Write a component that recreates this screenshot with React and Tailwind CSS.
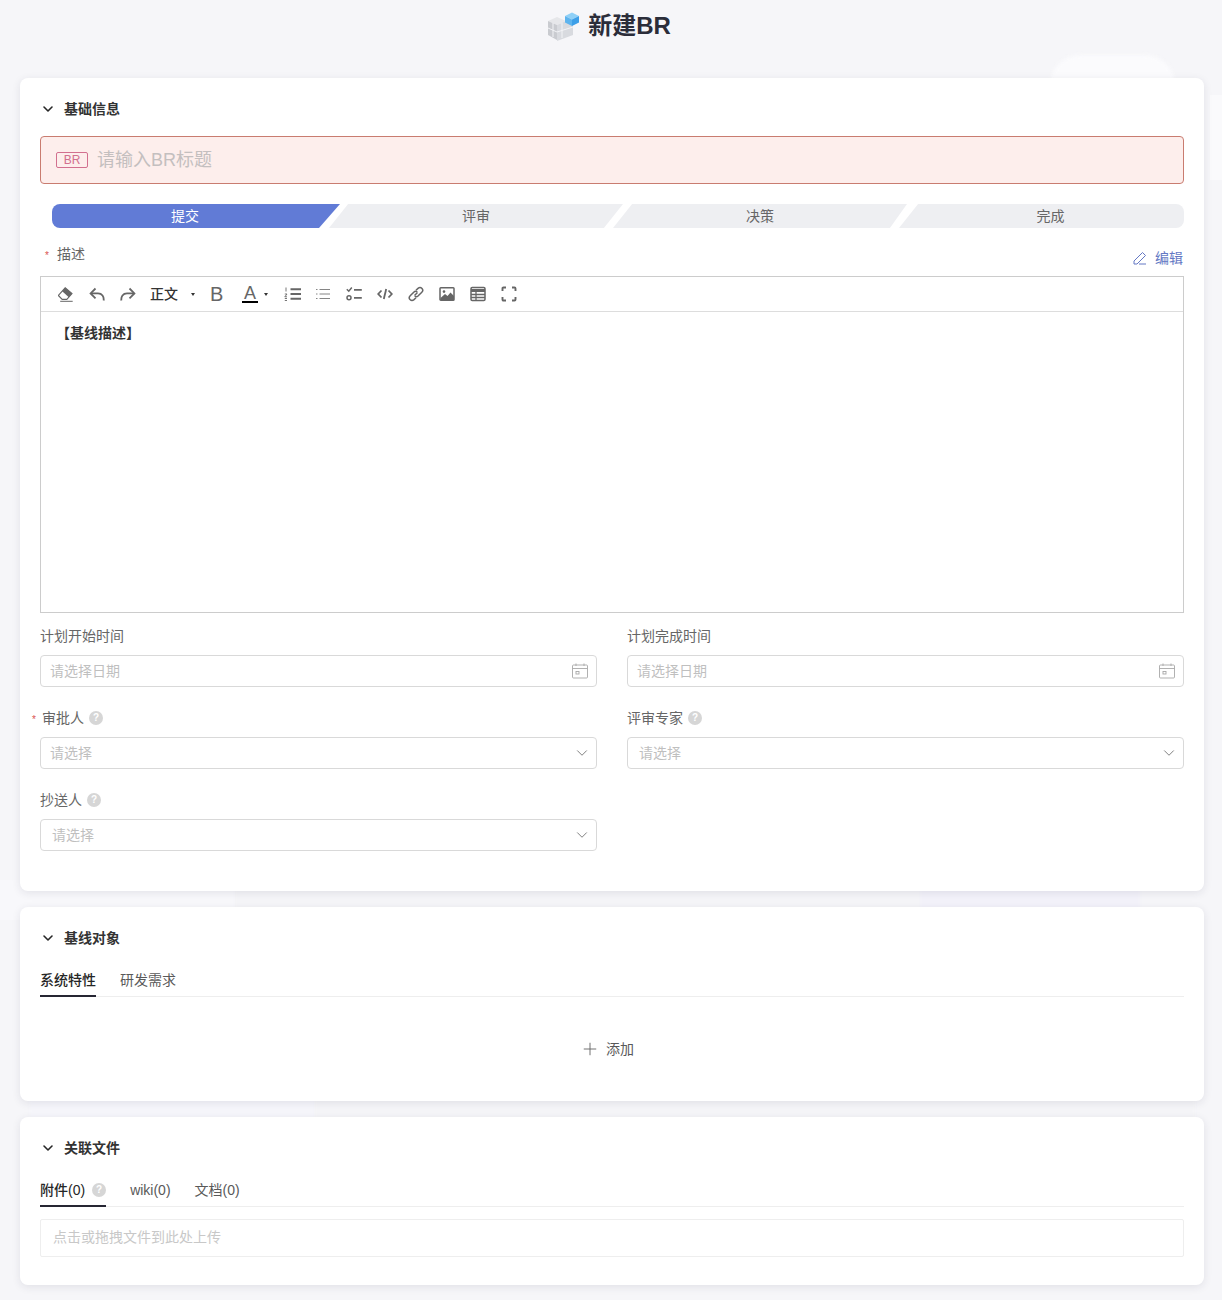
import React from "react";
import { ChevronDown, Plus } from "lucide-react";

// 도구모음 아이콘
const Ico = ({ children, w = 16, h = 16 }) => (
    <svg width={w} height={h} viewBox="0 0 16 16" fill="none" stroke="#666" strokeWidth="1.8">
        {children}
    </svg>
);

const toolIcons = [
    <Ico><path d="M0.4 9.5 L7.2 1.8 L14 7.5 L8.8 13.4 L4.2 13.4 Z" fill="#fff" strokeWidth="1.1" /><path d="M4.2 5.2 L7.2 1.8 L14 7.5 L10.8 11.2 Z" fill="#666" stroke="none" /><path d="M2.2 15.3 H14.7" strokeWidth="1" /></Ico>,
    <Ico><path d="M6.5 2.5 L1.6 7.4 L6.5 12.3" /><path d="M2 7.4 H9 C13 7.4 15.2 10.5 14.6 14.5" /></Ico>,
    <Ico><path d="M9.5 2.5 L14.4 7.4 L9.5 12.3" /><path d="M14 7.4 H7 C3 7.4 0.8 10.5 1.4 14.5" /></Ico>,
];

const listIcons = [
    <Ico w={18}><path d="M6.5 3.2 H17 M6.5 8 H17 M6.5 12.8 H17" strokeWidth="1.9" /><path d="M2 1.5 V5.5 M0.8 8 H3 L0.8 10.8 H3 M0.8 12.5 H3 M0.8 14.5 H3" strokeWidth="0.9" /></Ico>,
    <Ico><path d="M4.5 3.5 H15 M4.5 8 H15 M4.5 12.5 H15" strokeWidth="0.8" /><path d="M1 3.5 H2.5 M1 8 H2.5 M1 12.5 H2.5" strokeWidth="0.8" /></Ico>,
    <Ico><path d="M0.8 3.2 L2.8 5.2 L5.8 1.6" strokeWidth="1.5" /><path d="M8 3.8 H15.8 M8 11.8 H15.8" /><circle cx="3" cy="11.8" r="2" strokeWidth="1.5" /></Ico>,
    <Ico><path d="M4.5 4.5 L1.2 8 L4.5 11.5 M11.5 4.5 L14.8 8 L11.5 11.5" /><path d="M9.2 3 L6.8 13" /></Ico>,
    <Ico><path d="M6.5 9.5 L9.5 6.5" strokeWidth="1.5" /><path d="M8 4.2 L10 2.4 C11.3 1.3 13 1.5 14 2.5 C15 3.6 14.9 5.2 13.8 6.3 L10 10 C8.9 11 7.5 10.8 6.8 10" strokeWidth="1.5" /><path d="M8 11.8 L6 13.6 C4.7 14.7 3 14.5 2 13.5 C1 12.4 1.1 10.8 2.2 9.7 L6 6 C7 5 8.5 5.2 9.2 6" strokeWidth="1.5" /></Ico>,
    <Ico><rect x="1" y="1.8" width="14" height="12.4" rx="0.8" strokeWidth="1.5" /><circle cx="5" cy="5.6" r="1.3" fill="#666" stroke="none" /><path d="M1.5 12 L6 8 L8.5 10 L11.5 6.5 L15 10 V14 H1.5 Z" fill="#666" stroke="none" /></Ico>,
    <Ico><rect x="1" y="1.5" width="14" height="13" rx="1.2" strokeWidth="1.5" /><path d="M1 4.5 H15" strokeWidth="3" /><path d="M1 8.5 H15 M1 11.5 H15 M6 5.5 V14.5" strokeWidth="1.3" /></Ico>,
    <Ico><path d="M1.5 5 V2.5 Q1.5 1.5 2.5 1.5 H5 M11 1.5 H13.5 Q14.5 1.5 14.5 2.5 V5 M14.5 11 V13.5 Q14.5 14.5 13.5 14.5 H11 M5 14.5 H2.5 Q1.5 14.5 1.5 13.5 V11" strokeWidth="1.9" /></Ico>,
];

const Caret = () => <span className="w-0 h-0 border-x-[2px] border-x-transparent border-t-[3px] border-t-[#333]" />;

const Help = ({ className = "" }) => (
    <span className={`w-[14px] h-[14px] rounded-full bg-[#d6d6d6] text-white text-[10px] leading-[14px] font-bold text-center ${className}`}>?</span>
);

const Star = ({ className = "" }) => <span className={`text-[#d9534f] text-[10px] leading-none ${className}`}>*</span>;

const Heading = ({ title }) => (
    <div className="flex items-center h-[22px]">
        <ChevronDown size={16} strokeWidth={2.4} className="text-[#262626]" />
        <span className="ml-[8px] text-sm font-semibold text-[#333]">{title}</span>
    </div>
);

const CalendarIcon = () => (
    <svg width="16" height="16" viewBox="0 0 16 16" fill="none" stroke="#a8a8a8" strokeWidth="0.9">
        <rect x="0.5" y="2" width="15" height="13" rx="1" />
        <path d="M0.5 5.5 H15.5 M4 0.5 V3 M12 0.5 V3" />
        <rect x="4" y="8.5" width="3" height="2.5" />
    </svg>
);

const DateField = ({ label }) => (
    <div>
        <div className="h-[22px] text-sm leading-[22px] text-[#666]">{label}</div>
        <div className="mt-[8px] h-[32px] border border-[#d9d9d9] rounded bg-white flex items-center justify-between pl-[9px] pr-[8px]">
            <span className="text-sm text-[#bfbfbf]">请选择日期</span>
            <CalendarIcon />
        </div>
    </div>
);

const SelectField = ({ label, required, textPad = "pl-[9px]" }) => (
    <div>
        <div className="h-[22px] flex items-center text-sm text-[#666] relative">
            {required && <Star className="absolute left-[-8px] top-[8px]" />}
            <span className={required ? "ml-[2px]" : ""}>{label}</span>
            <Help className="ml-[5px]" />
        </div>
        <div className={`mt-[8px] h-[32px] border border-[#d9d9d9] rounded bg-white flex items-center justify-between pr-[5px] ${textPad}`}>
            <span className="text-sm text-[#bfbfbf]">请选择</span>
            <ChevronDown size={18} strokeWidth={1} className="text-[#555]" />
        </div>
    </div>
);

const Card = ({ className = "", children }) => (
    <div className={`relative bg-white rounded-lg shadow-[0_2px_8px_rgba(40,40,70,0.1)] px-[20px] pt-[20px] ${className}`}>
        {children}
    </div>
);

const steps = [
    { name: "提交", cls: "w-[288px] bg-[#617bd6] text-white rounded-l-lg pr-[22px] [clip-path:polygon(0_0,100%_0,92.7%_100%,0_100%)]" },
    { name: "评审", cls: "w-[294px] -ml-[11px] bg-[#eeeff2] text-[#666] [clip-path:polygon(6.5%_0,100%_0,93.5%_100%,0_100%)]" },
    { name: "决策", cls: "w-[294px] -ml-[10px] bg-[#eeeff2] text-[#666] [clip-path:polygon(6.5%_0,100%_0,94.2%_100%,0_100%)]" },
    { name: "完成", cls: "w-[285px] -ml-[8px] bg-[#eeeff2] text-[#666] rounded-r-lg pl-[18px] [clip-path:polygon(6.7%_0,100%_0,100%_100%,0_100%)]" },
];

export default function App() {
    return (
        <div className="relative w-full h-[1300px] overflow-hidden bg-[#f6f6f9] font-['Liberation_Sans','Noto_Sans_CJK_SC',sans-serif]">
            {/* 배경 장식 */}
            <div className="absolute left-[1050px] top-[55px] w-[125px] h-[60px] rounded-full bg-[#fbfbfd] blur-[2px]" />
            <div className="absolute left-[1210px] top-[95px] w-[40px] h-[85px] bg-[#fafafc]" />
            <div className="absolute left-[0px] top-[880px] w-[235px] h-[40px] bg-[#f8f8fb]" />
            <div className="absolute left-[235px] top-[880px] w-[685px] h-[40px] bg-[#f5f5f8] blur-[1px]" />
            <div className="absolute left-[920px] top-[880px] w-[220px] h-[40px] bg-[#f3f2fa] blur-[1px]" />
            <div className="absolute left-[30px] top-[1095px] w-[285px] h-[30px] bg-[#f6f6fb] blur-[1px]" />
            <div className="absolute left-[315px] top-[1095px] w-[880px] h-[30px] bg-[#f5f5f8] blur-[1px]" />

            <div className="relative h-[78px]">
                <div className="flex items-center justify-center h-[52px] pr-[4px]">
                    <svg width="33" height="30" viewBox="0 0 33 30">
                        <path d="M1 10 L10 6 L19 10 L10 14 Z" fill="#e6e7ea" />
                        <path d="M1 10 L10 14 V29 L1 24 Z" fill="#c9cbd0" />
                        <path d="M10 14 L19 10 L26 14 V24 L10 30 Z" fill="#d8dadf" />
                        <path d="M1 17 L10 21 L26 16 M6 12 V26 M15 12 V27" stroke="#f2f3f6" strokeWidth="1" fill="none" />
                        <path d="M18 5 L25 1.5 L32 5 L25 8.5 Z" fill="#8fd0f7" />
                        <path d="M18 5 L25 8.5 V15 L18 11.5 Z" fill="#5eb4ee" />
                        <path d="M25 8.5 L32 5 V11.5 L25 15 Z" fill="#3d9fe8" />
                    </svg>
                    <span className="ml-[8px] text-2xl font-semibold text-[#2b2d3a]">新建BR</span>
                </div>
            </div>

            <div className="relative pl-[20px] pr-[18px] flex flex-col gap-[16px]">
                {/* 기초 정보 */}
                <Card className="h-[813px]">
                    <Heading title="基础信息" />
                    <div className="mt-[16px] h-[48px] border border-[#c97c70] rounded bg-[#fdeeec] flex items-center pl-[15px]">
                        <span className="w-[32px] h-[16px] border border-[#d2708f] rounded-[2px] text-xs leading-[14px] text-center text-[#d2708f]">BR</span>
                        <span className="ml-[9px] text-lg text-[#c4bfbf]">请输入BR标题</span>
                    </div>

                    <div className="mt-[20px] ml-[12px] flex h-[24px]">
                        {steps.map((step) => (
                            <div key={step.name} className={`${step.cls} shrink-0 flex items-center justify-center text-sm`}>
                                {step.name}
                            </div>
                        ))}
                    </div>

                    <div className="mt-[15px] h-[33px] flex justify-between">
                        <div className="h-[22px] flex items-center pl-[5px] text-sm text-[#666]">
                            <Star className="mt-[4px]" />
                            <span className="ml-[8px]">描述</span>
                        </div>
                        <div className="mt-[4px] mr-[1px] h-[22px] flex items-center gap-[8px] text-sm text-[#6478c4]">
                            <svg width="14" height="14" viewBox="0 0 14 14" fill="none" stroke="#6478c4" strokeWidth="1">
                                <path d="M1 10 L9.5 1.5 L12.5 4.5 L4 13 H1 Z M6 13 H13" />
                            </svg>
                            <span>编辑</span>
                        </div>
                    </div>

                    {/* 에디터 */}
                    <div className="h-[337px] border border-[#ccc]">
                        <div className="h-[35px] border-b border-[#ddd] flex items-center pl-[9px]">
                            {toolIcons.map((icon, i) => (
                                <span key={i} className="w-[31px] flex justify-center">{icon}</span>
                            ))}
                            <span className="ml-[7px] w-[27px] text-sm font-medium text-[#333] whitespace-nowrap">正文</span>
                            <span className="ml-[14px] w-[3px] flex"><Caret /></span>
                            <span className="ml-[16px] w-[15px] text-[20px] leading-none text-[#666]">B</span>
                            <span className="ml-[17px] w-[16px] relative flex flex-col items-center text-[#666]">
                                <span className="text-[18px] leading-[15px]">A</span>
                                <span className="w-[16px] h-[2px] bg-black" />
                            </span>
                            <span className="ml-[6px] w-[4px] flex"><Caret /></span>
                            <div className="ml-[8px] flex">
                                {listIcons.map((icon, i) => (
                                    <span key={i} className="w-[31px] flex justify-center">{icon}</span>
                                ))}
                            </div>
                        </div>
                        <div className="pl-[15px] pt-[10px] text-sm leading-[22px] font-semibold text-[#333]">【基线描述】</div>
                    </div>

                    <div className="mt-[12px] grid grid-cols-2 gap-x-[30px] gap-y-[20px]">
                        <DateField label="计划开始时间" />
                        <DateField label="计划完成时间" />
                        <SelectField label="审批人" required />
                        <SelectField label="评审专家" textPad="pl-[11px]" />
                        <SelectField label="抄送人" textPad="pl-[11px]" />
                    </div>
                </Card>

                {/* 기선 대상 */}
                <Card className="h-[194px]">
                    <Heading title="基线对象" />
                    <div className="mt-[20px] h-[28px] pt-[1px] flex gap-[24px] border-b border-[#eee] text-sm">
                        <span className="h-[27px] border-b-2 border-[#262633] text-[#262626] font-medium">系统特性</span>
                        <span className="text-[#595959]">研发需求</span>
                    </div>
                    <div className="mt-[42px] flex items-center justify-center gap-[6px] pr-[10px] text-sm text-[#595959]">
                        <Plus size={20} strokeWidth={1.1} className="text-[#666]" />
                        <span>添加</span>
                    </div>
                </Card>

                {/* 관련 파일 */}
                <Card className="h-[168px]">
                    <Heading title="关联文件" />
                    <div className="mt-[20px] h-[28px] pt-[1px] flex gap-[24px] border-b border-[#eee] text-sm">
                        <span className="h-[27px] border-b-2 border-[#262633] flex items-start">
                            <span className="text-[#262626] font-medium">附件(0)</span>
                            <Help className="ml-[7px] mt-[3px]" />
                        </span>
                        <span className="text-[#595959]">wiki(0)</span>
                        <span className="text-[#595959]">文档(0)</span>
                    </div>
                    <div className="mt-[12px] h-[38px] border border-[#eee] rounded-[2px] flex items-center pl-[12px] pb-[2px] text-sm text-[#c8c8c8]">
                        点击或拖拽文件到此处上传
                    </div>
                </Card>
            </div>
        </div>
    );
}
